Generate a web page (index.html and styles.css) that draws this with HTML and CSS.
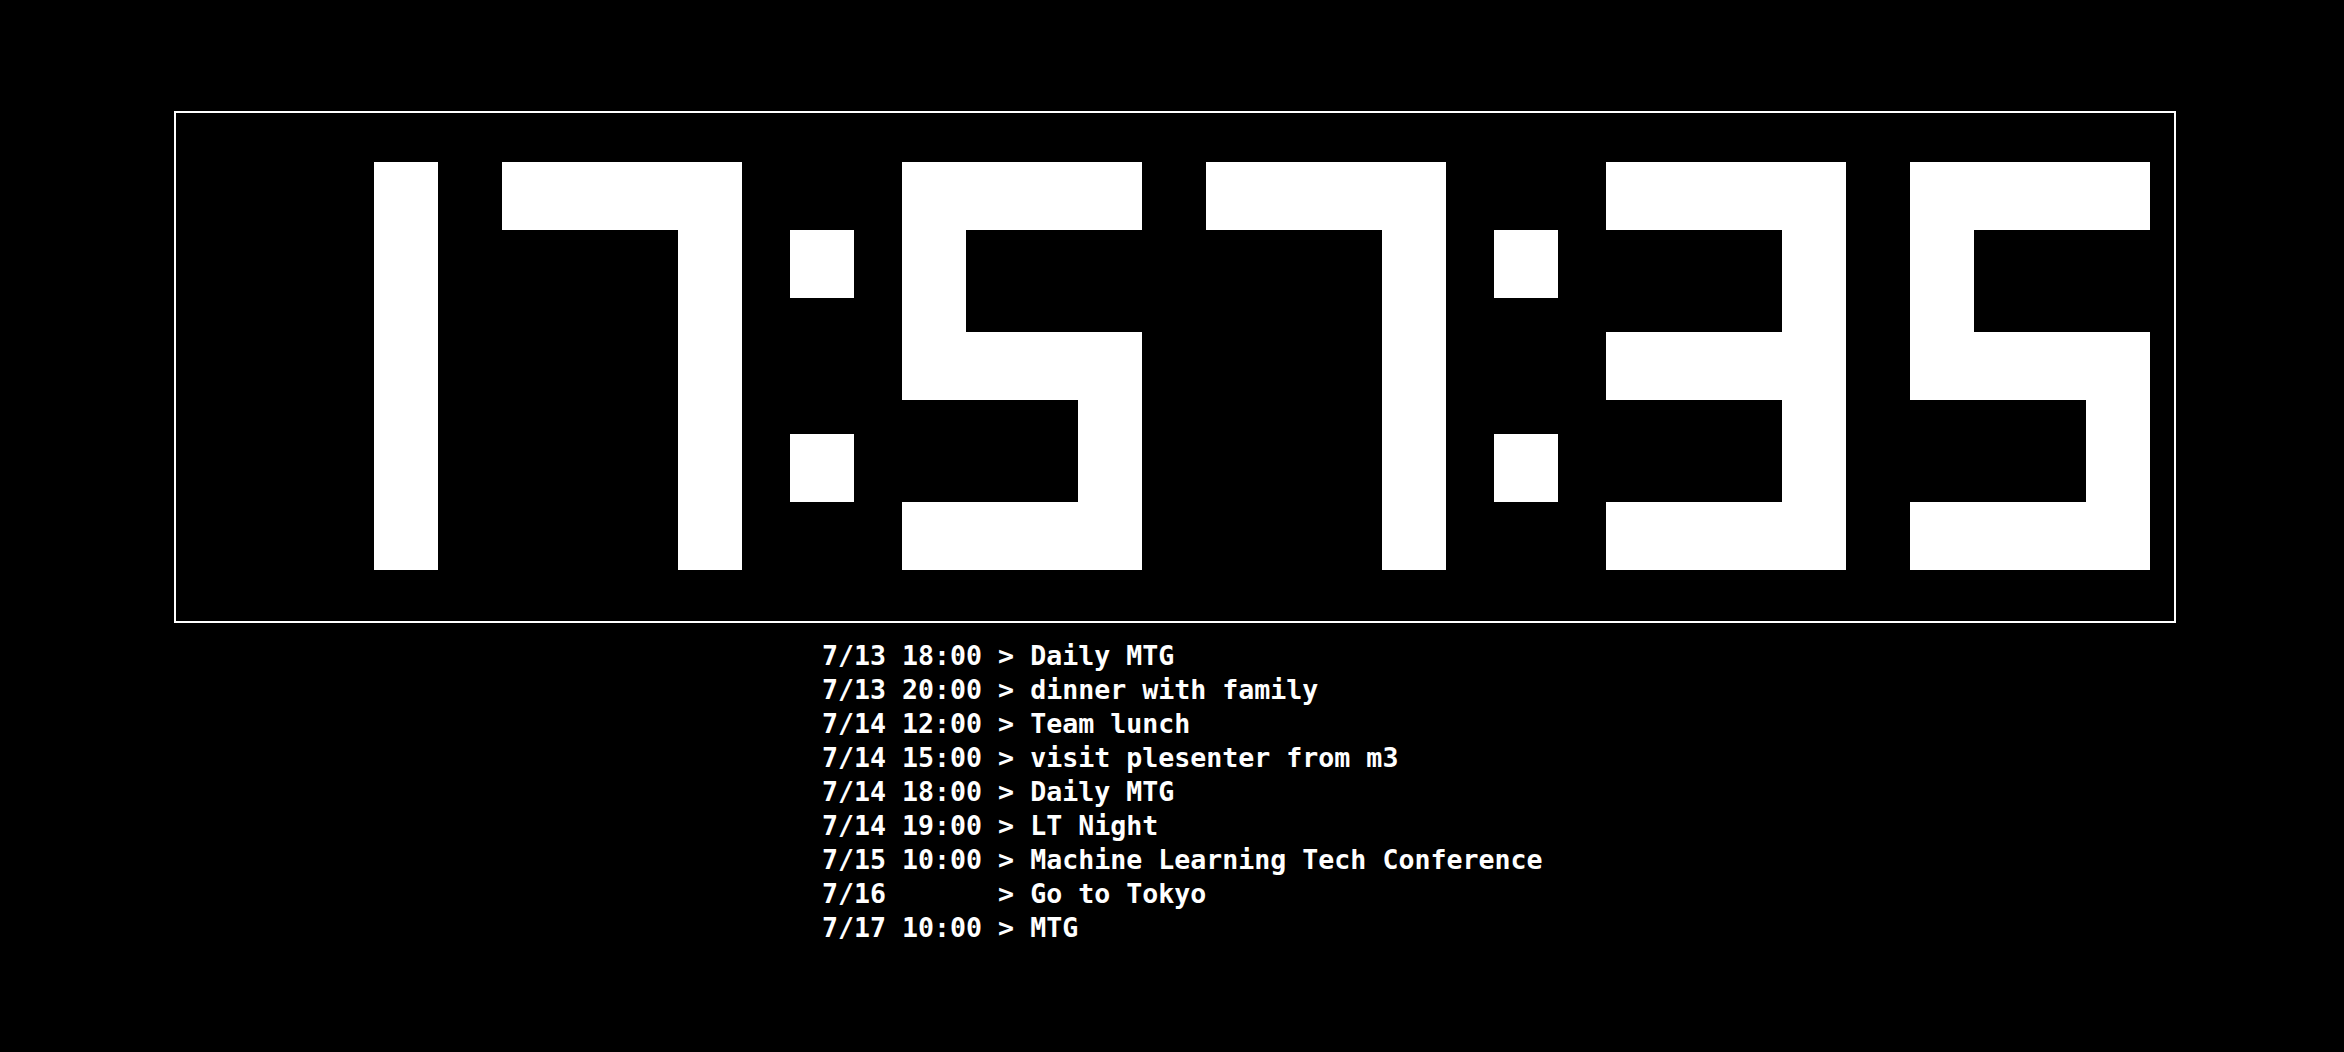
FILE: index.html
```html
<!DOCTYPE html>
<html>
<head>
<meta charset="utf-8">
<title>Clock</title>
<link rel="stylesheet" href="styles.css">
</head>
<body>
<div class="screen">
  <div class="clock-box">
    <div class="clock">
      <div class="digit"><div class="seg r-full"></div></div>
      <div class="digit"><div class="seg top"></div><div class="seg r-low"></div></div>
      <div class="colon"><div class="dot up"></div><div class="dot down"></div></div>
      <div class="digit"><div class="seg top"></div><div class="seg ul"></div><div class="seg mid"></div><div class="seg lr"></div><div class="seg bot"></div></div>
      <div class="digit"><div class="seg top"></div><div class="seg r-low"></div></div>
      <div class="colon"><div class="dot up"></div><div class="dot down"></div></div>
      <div class="digit"><div class="seg top"></div><div class="seg ur"></div><div class="seg mid"></div><div class="seg lr"></div><div class="seg bot"></div></div>
      <div class="digit"><div class="seg top"></div><div class="seg ul"></div><div class="seg mid"></div><div class="seg lr"></div><div class="seg bot"></div></div>
    </div>
  </div>
  <div class="schedule">
    <div class="line">7/13 18:00 &gt; Daily MTG</div>
    <div class="line">7/13 20:00 &gt; dinner with family</div>
    <div class="line">7/14 12:00 &gt; Team lunch</div>
    <div class="line">7/14 15:00 &gt; visit plesenter from m3</div>
    <div class="line">7/14 18:00 &gt; Daily MTG</div>
    <div class="line">7/14 19:00 &gt; LT Night</div>
    <div class="line">7/15 10:00 &gt; Machine Learning Tech Conference</div>
    <div class="line">7/16       &gt; Go to Tokyo</div>
    <div class="line">7/17 10:00 &gt; MTG</div>
  </div>
</div>
</body>
</html>
```

FILE: styles.css
```css
html, body {
  margin: 0;
  padding: 0;
  background: #000;
  width: 2344px;
  height: 1052px;
  overflow: hidden;
}

.screen {
  padding: 111px 0 0 174px;
  box-sizing: border-box;
}

.clock-box {
  width: 2002px;
  height: 512px;
  box-sizing: border-box;
  border: 2px solid #fff;
  padding: 49px 0 0 22px;
}

.clock {
  display: flex;
  align-items: flex-start;
}

.digit {
  display: grid;
  grid-template-columns: repeat(15, 16px);
  grid-template-rows: repeat(12, 34px);
}

.digit + .digit {
  margin-left: 64px;
}

.colon {
  display: grid;
  grid-template-columns: repeat(4, 16px);
  grid-template-rows: repeat(12, 34px);
  margin: 0 48px;
}

.seg, .dot {
  background: #fff;
}

.top { grid-column: 1 / 16; grid-row: 1 / 3; }
.mid { grid-column: 1 / 16; grid-row: 6 / 8; }
.bot { grid-column: 1 / 16; grid-row: 11 / 13; }
.ul { grid-column: 1 / 5; grid-row: 3 / 6; }
.ur { grid-column: 12 / 16; grid-row: 3 / 6; }
.ll { grid-column: 1 / 5; grid-row: 8 / 11; }
.lr { grid-column: 12 / 16; grid-row: 8 / 11; }
.r-full { grid-column: 12 / 16; grid-row: 1 / 13; }
.r-low { grid-column: 12 / 16; grid-row: 3 / 13; }

.dot.up { grid-column: 1 / 5; grid-row: 3 / 5; }
.dot.down { grid-column: 1 / 5; grid-row: 9 / 11; }

.schedule {
  margin: 16px 0 0 648px;
  font-family: "DejaVu Sans Mono", monospace;
  font-weight: bold;
  font-size: 26.6px;
  line-height: 34px;
  color: #fff;
}

.line {
  white-space: pre;
}
```
